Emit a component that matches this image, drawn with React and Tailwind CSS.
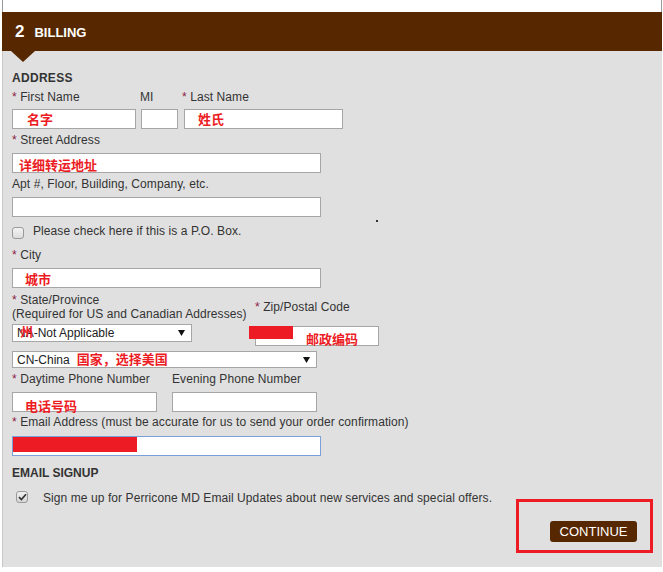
import React from "react";

const label = "text-[12px] leading-[14px] text-[#333] tracking-[0.08px]";
const red = "font-bold text-[13px] leading-none text-[#ec1c24] whitespace-nowrap";
const cjk = { fontFamily: '"Liberation Sans", "Noto Sans CJK SC", sans-serif' };

function Star() {
  return <span className="text-[#8c2045]">* </span>;
}

function Box({ w, children, blue }) {
  return (
    <div
      className={`relative h-[20px] bg-white border ${blue ? "border-[#7b9fd6]" : "border-[#a6a6a6]"}`}
      style={{ width: w }}
    >
      {children}
    </div>
  );
}

function Arrow() {
  return (
    <svg width="7" height="6" viewBox="0 0 7 6" className="shrink-0">
      <polygon points="0,0 7,0 3.5,6" fill="#111" />
    </svg>
  );
}

function Select({ w, h, children }) {
  return (
    <div
      className="relative bg-white border border-[#a6a6a6] flex items-center pl-[4px] pr-[6px] text-[12px] text-[#222]"
      style={{ width: w, height: h }}
    >
      <div className="flex-1 flex items-center whitespace-nowrap">{children}</div>
      <Arrow />
    </div>
  );
}

export default function App() {
  return (
    <div
      className="relative w-[663px] h-[572px] bg-white overflow-hidden"
      style={{ fontFamily: '"Liberation Sans", Arial, "Noto Sans CJK SC", sans-serif' }}
    >
      <div className="ml-[2px] w-[660px]">
        {/* top strip */}
        <div className="h-[12px] bg-white border-l border-r border-[#9a9a9a]" />

        {/* header band */}
        <div className="relative h-[39px] bg-[#572800] flex items-center pl-[13px] gap-[10px] text-white font-bold">
          <span className="text-[17px] leading-none">2</span>
          <span className="text-[13px] leading-none mt-[1px]">BILLING</span>
          <div className="absolute left-[9px] top-[39px] w-0 h-0 border-l-[12px] border-r-[12px] border-t-[11px] border-l-transparent border-r-transparent border-t-[#572800]" />
        </div>

        {/* body */}
        <div className="h-[516px] bg-[#e0e0e0] border-l border-[#c8c8c8] pl-[9px] pt-[20px]">
          <div className="text-[12px] leading-[14px] font-bold text-[#333] tracking-[0.3px]">ADDRESS</div>

          <div className={`flex mt-[5px] ${label}`}>
            <div className="w-[128px]"><Star />First Name</div>
            <div className="w-[42px]">MI</div>
            <div><Star />Last Name</div>
          </div>
          <div className="flex mt-[5px] gap-[5px]">
            <Box w={124}>
              <span className={`absolute left-[14px] top-[3px] ${red}`} style={cjk}>名字</span>
            </Box>
            <Box w={37} />
            <div className="ml-[1px]">
              <Box w={159}>
                <span className={`absolute left-[13px] top-[3px] ${red}`} style={cjk}>姓氏</span>
              </Box>
            </div>
          </div>

          <div className={`mt-[4px] ${label}`}><Star />Street Address</div>
          <div className="mt-[6px]">
            <Box w={309}>
              <span className={`absolute left-[6px] top-[5px] ${red}`} style={cjk}>详细转运地址</span>
            </Box>
          </div>

          <div className={`mt-[4px] ${label}`}>Apt #, Floor, Building, Company, etc.</div>
          <div className="mt-[6px]">
            <Box w={309} />
          </div>

          <div className={`mt-[7px] flex items-start ${label}`}>
            <div className="mt-[3px] w-[12px] h-[12px] rounded-[3px] border border-[#9a9a9a] bg-gradient-to-b from-[#f4f4f4] to-[#dcdcdc]" />
            <span className="ml-[9px]">Please check here if this is a P.O. Box.</span>
          </div>

          <div className={`mt-[9px] ${label}`}><Star />City</div>
          <div className="mt-[6px]">
            <Box w={309}>
              <span className={`absolute left-[12px] top-[4px] ${red}`} style={cjk}>城市</span>
            </Box>
          </div>

          <div className="mt-[5px] flex items-start">
            <div className="w-[243px]">
              <div className={label}><Star />State/Province</div>
              <div className={label}>(Required for US and Canadian Addresses)</div>
              <div className="mt-[3px]">
                <Select w={180} h={18}>
                  <span className="relative">
                    NA-Not Applicable
                    <span className={`absolute left-[3px] top-[1px] ${red} text-[12px]`} style={cjk}>州</span>
                  </span>
                </Select>
              </div>
            </div>
            <div>
              <div className={`mt-[7px] ${label}`}><Star />Zip/Postal Code</div>
              <div className="mt-[12px]">
                <Box w={124}>
                  <span className={`absolute left-[50px] top-[6px] ${red}`} style={cjk}>邮政编码</span>
                </Box>
              </div>
            </div>
          </div>

          <div className="mt-[5px]">
            <Select w={305} h={17}>
              <span>CN-China</span>
              <span className={`ml-[7px] ${red}`} style={cjk}>国家，选择美国</span>
            </Select>
          </div>

          <div className={`mt-[4px] flex ${label}`}>
            <div className="w-[160px]"><Star />Daytime Phone Number</div>
            <div>Evening Phone Number</div>
          </div>
          <div className="mt-[6px] flex gap-[15px]">
            <Box w={145}>
              <span className={`absolute left-[12px] top-[7px] ${red}`} style={cjk}>电话号码</span>
            </Box>
            <Box w={145} />
          </div>

          <div className={`mt-[3px] ${label}`}>
            <Star />Email Address (must be accurate for us to send your order confirmation)
          </div>
          <div className="mt-[7px]">
            <Box w={309} blue />
          </div>

          <div className="mt-[10px] text-[12px] leading-[14px] font-bold text-[#333]">EMAIL SIGNUP</div>

          <div className={`mt-[11px] flex items-start ${label}`}>
            <div className="ml-[4px] w-[12px] h-[12px] rounded-[3px] border border-[#9a9a9a] bg-gradient-to-b from-[#f0f0f0] to-[#d6d6d6] flex items-center justify-center">
              <svg width="9" height="8" viewBox="0 0 9 8">
                <path d="M1 4.2 L3.4 6.6 L8 1.2" stroke="#333" strokeWidth="1.7" fill="none" />
              </svg>
            </div>
            <span className="ml-[15px]">
              Sign me up for Perricone MD Email Updates about new services and special offers.
            </span>
          </div>

          <div className="mt-[16px] flex justify-end pr-[25px]">
            <button className="w-[87px] h-[21px] rounded-[3px] bg-[#572800] text-white text-[13px] leading-none flex items-center justify-center">
              CONTINUE
            </button>
          </div>
        </div>
      </div>

      {/* annotation overlays */}
      <div className="absolute left-[249px] top-[326px] w-[44px] h-[13px] bg-[#ed1c24]" />
      <div className="absolute left-[13px] top-[437px] w-[124px] h-[15px] bg-[#ed1c24]" />
      <div className="absolute left-[516px] top-[499px] w-[137px] h-[54px] border-[3px] border-[#ed1c24]" />
      <div className="absolute left-[376px] top-[220px] w-[2px] h-[2px] bg-[#333]" />
    </div>
  );
}
